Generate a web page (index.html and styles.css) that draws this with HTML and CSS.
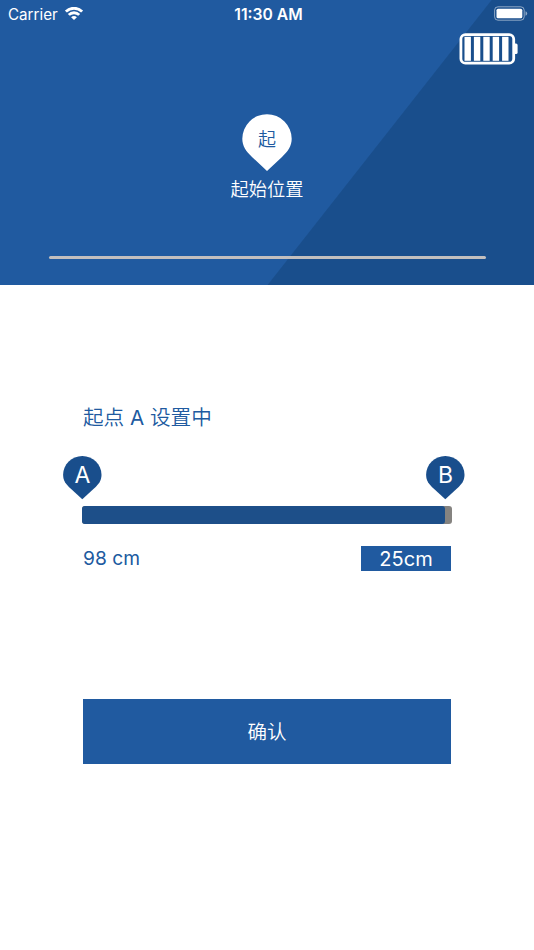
FILE: index.html
```
<!DOCTYPE html>
<html lang="zh-CN">
<head>
  <meta charset="UTF-8" />
  <meta name="viewport" content="width=device-width, initial-scale=1.0"/>
  <title>起始位置</title>
  <link rel="stylesheet" href="styles.css">
</head>
<body>
  <!-- Header Section -->
  <header class="header">
    <div class="status-bar">
      <div class="carrier">
        <span class="carrier-name">Carrier</span>
        <svg class="wifi" width="18" height="14" viewBox="0 0 18 14" fill="none" stroke="#fff" stroke-width="2.8">
          <path d="M0.9 4.6C5.4 0.1 12.6 0.1 17.1 4.6" />
          <path d="M3.8 7.9C6.6 5 11.4 5 14.2 7.9" />
          <path d="M6.1 10.2C7.8 8.6 10.2 8.6 11.9 10.2L9 13Z" fill="#fff" stroke="none" />
        </svg>
      </div>
      <span class="time">11:30 AM</span>
      <svg class="phone-battery" width="34" height="15" viewBox="0 0 34 15">
        <rect x="0.6" y="0.8" width="29.6" height="13.4" rx="3.4" fill="none" stroke="#fff" stroke-opacity="0.5" />
        <rect x="2.5" y="2.7" width="25.8" height="9.6" rx="1.6" fill="#fff" />
        <path d="M31.5 5.2Q33.2 5.8 33.2 7.5T31.5 9.8Z" fill="#fff" fill-opacity="0.5" />
      </svg>
    </div>

    <div class="device-battery">
      <svg width="60" height="32" viewBox="0 0 60 32" fill="#fff">
        <rect x="1.9" y="1.6" width="52.8" height="28.6" rx="4.5" fill="none" stroke="#fff" stroke-width="2.8" />
        <path d="M55 10.5H57Q58.6 10.5 58.6 12V19.5Q58.6 21 57 21H55Z" />
        <rect x="5.5" y="3.8" width="6.4" height="24" />
        <rect x="14.9" y="3.8" width="6.4" height="24" />
        <rect x="24.3" y="3.8" width="6.4" height="24" />
        <rect x="33.7" y="3.8" width="6.4" height="24" />
        <rect x="43.1" y="3.8" width="6.4" height="24" />
      </svg>
    </div>

    <div class="start-position">
      <div class="pin pin-start">
        <svg width="50" height="57" viewBox="0 0 50 57">
          <path d="M25 57L10 43C4 37.4 0.3 32 0.3 24.8A24.7 24.6 0 0 1 49.7 24.8C49.7 32 46 37.4 40 43Z" />
        </svg>
        <span class="pin-label">起</span>
      </div>
      <p class="start-text">起始位置</p>
    </div>
    <div class="header-line"></div>
  </header>

  <!-- Range Section -->
  <main class="content">
    <h1 class="title">起点 <span class="latin">A</span> 设置中</h1>
    <div class="pins">
      <div class="pin pin-point">
        <svg width="39" height="44" viewBox="0 0 39 44">
          <path d="M19.3 43.2L7.6 32.5C2.8 28.1 0.1 24.5 0.1 18.7C0.1 8.3 8.7 0 19.3 0S38.5 8.3 38.5 18.7C38.5 24.5 35.8 28.1 31 32.5Z" />
        </svg>
        <span class="pin-label latin">A</span>
      </div>
      <div class="pin pin-point">
        <svg width="39" height="44" viewBox="0 0 39 44">
          <path d="M19.3 43.2L7.6 32.5C2.8 28.1 0.1 24.5 0.1 18.7C0.1 8.3 8.7 0 19.3 0S38.5 8.3 38.5 18.7C38.5 24.5 35.8 28.1 31 32.5Z" />
        </svg>
        <span class="pin-label latin">B</span>
      </div>
    </div>
    <div class="track">
      <div class="track-fill"></div>
    </div>
    <div class="values latin">
      <span class="distance">98 cm</span>
      <span class="distance-box">25cm</span>
    </div>
    <button class="confirm-btn">确认</button>
  </main>
</body>
</html>
```
FILE: styles.css
```
/* General Styles */
* {
  box-sizing: border-box;
}

body {
  font-family: Inter, "Noto Sans CJK SC", sans-serif;
  font-weight: 350;
  margin: 0;
  background-color: #ffffff;
  color: #205aa0;
}

svg {
  display: block;
}

/* Letters and numbers look too thin at the Chinese text weight */
.latin {
  font-weight: 400;
}

/* Header Section */
.header {
  height: 285px;
  color: #ffffff;
  background-color: #205aa0;
  /* Darker area on the right, cut diagonally */
  background-image: linear-gradient(128.17deg, transparent 0 calc(50% + 88px), #194e8c calc(50% + 89px));
}

.status-bar {
  display: grid;
  grid-template-columns: 1fr auto 1fr;
  align-items: center;
  height: 27px;
  padding: 0 6px 0 8px;
  font-size: 15.4px;
}

.carrier {
  display: flex;
  align-items: center;
  gap: 7px;
}

.carrier-name {
  padding-top: 1px;
  font-size: 15.2px;
  font-weight: 400;
}

.time {
  padding: 1px 0 0 1px;
  font-size: 15.7px;
  font-weight: 600;
}

.phone-battery {
  justify-self: end;
}

.device-battery {
  display: flex;
  justify-content: flex-end;
  padding: 6px 15px 0 0;
}

.start-position {
  display: flex;
  flex-direction: column;
  align-items: center;
  padding-top: 49px;
}

/* Pins */
.pin {
  display: grid;
  place-items: center;
}

.pin svg,
.pin-label {
  grid-area: 1 / 1;
}

.pin-start {
  fill: #ffffff;
  color: #205aa0;
  font-size: 18px;
  line-height: 52px;
}

.pin-point {
  fill: #194e8c;
  color: #ffffff;
  font-size: 23px;
  line-height: 38px;
}

.pin-label {
  align-self: start;
}

.start-text {
  margin: 5px 0 0;
  font-size: 18.2px;
  line-height: 26px;
}

.header-line {
  width: 437px;
  height: 3px;
  margin: 54px auto 0;
  border-radius: 1.5px;
  background-color: #c2bfbf;
}

/* Range Section */
.content {
  padding: 118px 83px 0;
}

.title {
  margin: 0;
  font-size: 20.6px;
  font-weight: 350;
  line-height: 30px;
}

.pins {
  display: flex;
  justify-content: space-between;
  margin: 23px -14px 0 -20px;
}

.track {
  height: 18px;
  margin: 6px -1px 0;
  border-radius: 3px;
  background-color: #858380;
}

.track-fill {
  width: 363px;
  height: 18px;
  border-radius: 3px;
  background-color: #1d4f89;
}

.values {
  display: flex;
  justify-content: space-between;
  margin-top: 22px;
  font-size: 19.2px;
  line-height: 25px;
}

.distance-box {
  width: 90px;
  height: 25px;
  background-color: #205aa0;
  color: #ffffff;
  font-size: 20px;
  line-height: 26px;
  text-align: center;
}

.confirm-btn {
  display: block;
  width: 100%;
  height: 65px;
  margin-top: 128px;
  padding: 0 0 2px;
  border: none;
  background-color: #205aa0;
  color: #ffffff;
  font-family: inherit;
  font-size: 19.5px;
  font-weight: 350;
  cursor: pointer;
}
```
